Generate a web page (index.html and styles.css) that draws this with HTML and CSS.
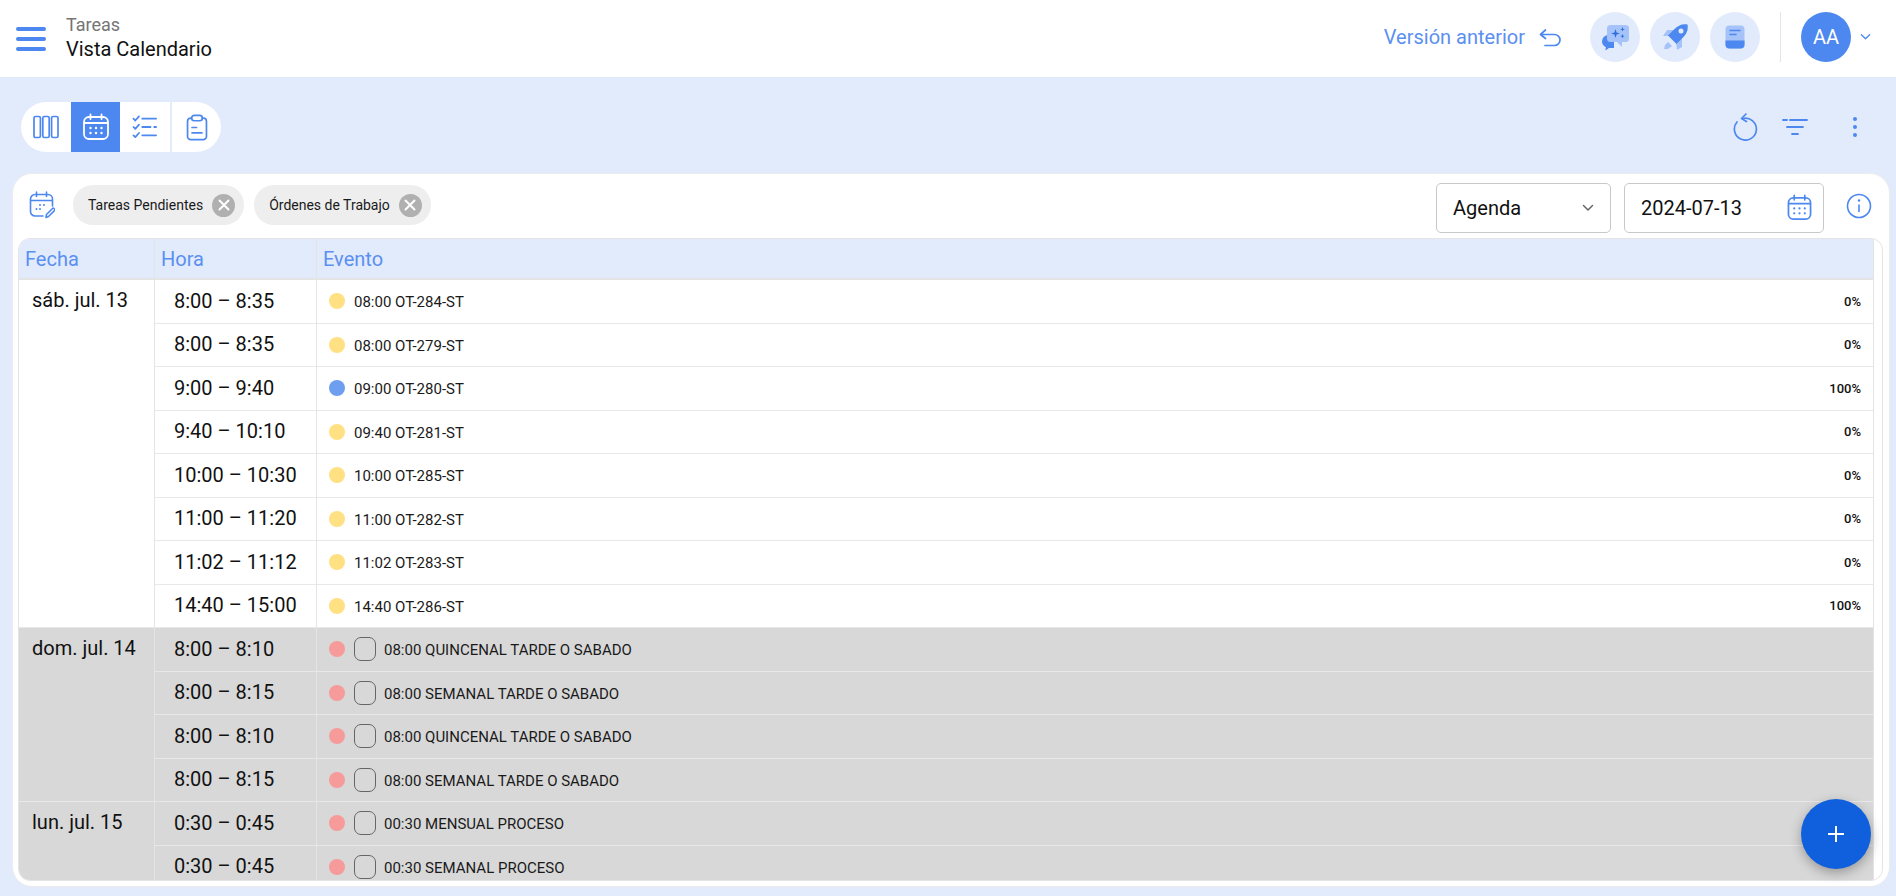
FILE: index.html
```html
<!DOCTYPE html>
<html lang="es">
<head>
<meta charset="utf-8">
<title>Vista Calendario</title>
<link rel="stylesheet" href="styles.css">
</head>
<body>
<header class="topbar">
  <button class="menu-btn" aria-label="Menú"><span></span><span></span><span></span></button>
  <div class="crumbs">
    <div class="crumb-sub">Tareas</div>
    <div class="crumb-title">Vista Calendario</div>
  </div>
  <div class="top-right">
    <a class="prev-link">Versión anterior
      <svg class="ic-undo" viewBox="0 0 22 18" fill="none" stroke="#4d88f0" stroke-width="1.700" stroke-linecap="round" stroke-linejoin="round"><path d="M6.500 1 1.500 5.500 6.500 9.500M1.500 5.500h14a5 5 0 0 1 0 11H6"/></svg>
    </a>
    <div class="round-btns">
      <span class="round-btn"><svg viewBox="0 0 30 30" width="30" height="30"><path d="M2 20a6.500 6.500 0 0 1 6.500-7H14v13H9l-3.500 2.500.3-3.500A6.500 6.500 0 0 1 2 20z" fill="#4d88f0"/><rect x="7" y="3" width="22" height="17" rx="3.500" fill="#a5c3f8"/><path d="M22 19v6l-6-6z" fill="#a5c3f8"/><path d="M15.500 7l1.100 3.400 3.400 1.100-3.400 1.100-1.100 3.400-1.100-3.400-3.400-1.100 3.400-1.100zM22.500 5l.6 1.700 1.700.6-1.700.6-.6 1.700-.6-1.700-1.700-.6 1.700-.6zM22.500 12l.6 1.600 1.600.6-1.600.6-.6 1.600-.6-1.600-1.600-.6 1.600-.6z" fill="#2f6fe0"/></svg></span>
      <span class="round-btn"><svg viewBox="0 0 30 30" width="30" height="30"><path d="M15 8H7l-4 6h7zM22 16v9l-5 3-1-8z" fill="#a5c3f8"/><path d="M8 20l4 4-4 3H4l1-4z" fill="#a5c3f8"/><path d="M27.500 2.500c1 5.500-1 9.500-5 13.500l-6 6-8.500-8.500 6-6c4-4 8-6 13.500-5z" fill="#4d88f0"/><circle cx="21" cy="9" r="2.500" fill="#e2ebfc"/></svg></span>
      <span class="round-btn"><svg viewBox="0 0 30 30" width="30" height="30"><rect x="5.500" y="3.500" width="19" height="23" rx="4" fill="#a5c3f8"/><path d="M5.500 18.500h19v4a4 4 0 0 1-4 4h-11a4 4 0 0 1-4-4z" fill="#4d88f0"/><path d="M10 8.500h10M10 12.500h6" stroke="#4d88f0" stroke-width="1.600" stroke-linecap="round"/></svg></span>
    </div>
    <span class="v-sep"></span>
    <span class="avatar">AA</span>
    <svg class="ic-chev" viewBox="0 0 12 8" fill="none" stroke="#4d88f0" stroke-width="1.500" stroke-linecap="round" stroke-linejoin="round"><path d="M1.500 1.500 6 6l4.500-4.500"/></svg>
  </div>
</header>

<main class="page">
  <div class="toolbar">
    <div class="view-switch">
      <button class="view-btn"><svg viewBox="0 0 28 24" width="28" height="24" fill="none" stroke="#4d88f0" stroke-width="1.700"><rect x="2" y="1.500" width="6.400" height="21" rx="1.500"/><rect x="10.800" y="1.500" width="6.400" height="21" rx="1.500"/><rect x="19.600" y="1.500" width="6.400" height="21" rx="1.500"/></svg></button>
      <button class="view-btn is-active"><svg viewBox="0 0 28 28" width="28" height="28" fill="none" stroke="#fff" stroke-width="1.800" stroke-linecap="round"><rect x="2" y="4" width="24" height="22" rx="5"/><path d="M2.500 10h23M8.500 1.500V6M19.500 1.500V6"/><path d="M8.500 15h.01M14 15h.01M19.500 15h.01M8.500 20h.01M14 20h.01M19.500 20h.01" stroke-width="2.400"/></svg></button>
      <button class="view-btn"><svg viewBox="0 0 28 26" width="26" height="24" fill="none" stroke="#4d88f0" stroke-width="1.900" stroke-linecap="round" stroke-linejoin="round"><path d="M1.500 4l2 2 4-4.500M1.500 13l2 2 4-4.500M1.500 22l2 2 4-4.500"/><path d="M11 4h15M11 13h9M24 13h2M11 22h15"/></svg></button>
      <button class="view-btn view-btn-last"><svg viewBox="0 0 24 30" width="22" height="27" fill="none" stroke="#4d88f0" stroke-width="1.900" stroke-linecap="round"><path d="M6 4.500H5a3.500 3.500 0 0 0-3.500 3.500v17A3.500 3.500 0 0 0 5 28.500h14a3.500 3.500 0 0 0 3.500-3.500V8A3.500 3.500 0 0 0 19 4.500h-1"/><rect x="6" y="1.500" width="12" height="6" rx="3"/><path d="M6.500 15h5M6.500 21h11"/></svg></button>
    </div>
    <div class="tool-actions">
      <svg class="tool-ic" viewBox="0 0 26 28" width="26" height="28" fill="none" stroke="#4d88f0" stroke-width="1.700" stroke-linecap="round" stroke-linejoin="round"><path d="M9.500 5.500A11 11 0 1 1 4 9"/><path d="M13 1 8.500 5.500l5 3"/></svg>
      <svg class="tool-ic" viewBox="0 0 26 18" width="26" height="18" fill="none" stroke="#4d88f0" stroke-width="1.800" stroke-linecap="round"><path d="M1 2h4M8 2h17M5 9h16M10 16h6"/></svg>
      <svg class="tool-ic dots" viewBox="0 0 6 22" width="6" height="22" fill="#4d88f0"><circle cx="3" cy="3" r="2"/><circle cx="3" cy="11" r="2"/><circle cx="3" cy="19" r="2"/></svg>
    </div>
  </div>

  <section class="card">
    <div class="card-head">
      <svg class="ic-cal-edit" viewBox="0 0 26 28" width="26" height="28" fill="none" stroke="#4d88f0" stroke-width="1.600" stroke-linecap="round" stroke-linejoin="round"><path d="M14 25H6a4.500 4.500 0 0 1-4.500-4.500V8A4.500 4.500 0 0 1 6 3.500h13A4.500 4.500 0 0 1 23.500 8v7"/><path d="M2 9.500h21M7.500 1v4.500M17.500 1v4.500"/><path d="M11 14h.01M15 14h.01M7.500 18h.01M11 18h.01" stroke-width="2"/><path d="M17 26.500l.5-3 6-6c1-1 3 1 2 2l-6 6z"/></svg>
      <span class="chip">Tareas Pendientes<i class="chip-x"><svg viewBox="0 0 12 12" width="12" height="12" stroke="#fff" stroke-width="2" stroke-linecap="round"><path d="M1.500 1.500l9 9M10.500 1.500l-9 9"/></svg></i></span>
      <span class="chip">Órdenes de Trabajo<i class="chip-x"><svg viewBox="0 0 12 12" width="12" height="12" stroke="#fff" stroke-width="2" stroke-linecap="round"><path d="M1.500 1.500l9 9M10.500 1.500l-9 9"/></svg></i></span>
      <div class="head-right">
        <div class="field field-select">Agenda
          <svg viewBox="0 0 12 8" width="12" height="8" fill="none" stroke="#666" stroke-width="1.500" stroke-linecap="round" stroke-linejoin="round"><path d="M1.500 1.500 6 6l4.500-4.500"/></svg>
        </div>
        <div class="field field-date">2024-07-13
          <svg viewBox="0 0 26 28" width="25" height="27" fill="none" stroke="#4d88f0" stroke-width="1.800" stroke-linecap="round"><rect x="1.500" y="4" width="23" height="22" rx="5"/><path d="M2 10h22M7.500 1.500V6M18.500 1.500V6"/><path d="M7.500 15h.01M13 15h.01M18.500 15h.01M7.500 20h.01M13 20h.01M18.500 20h.01" stroke-width="2.300"/></svg>
        </div>
        <svg class="ic-info" viewBox="0 0 26 26" width="26" height="26" fill="none" stroke="#4d88f0" stroke-width="1.600" stroke-linecap="round"><circle cx="13" cy="13" r="11.500"/><path d="M13 12v6.500"/><path d="M13 7.500h.01" stroke-width="2.400"/></svg>
      </div>
    </div>

    <div class="agenda-frame">
      <table class="agenda">
        <colgroup><col class="col-date"><col class="col-time"><col></colgroup>
        <thead>
          <tr><th>Fecha</th><th>Hora</th><th>Evento</th></tr>
        </thead>
        <tbody>
          <tr><td class="date" rowspan="8">sáb. jul. 13</td><td class="time">8:00 – 8:35</td><td><div class="ev"><i class="dot y"></i><span class="ev-t">08:00 OT-284-ST</span><b class="pct">0%</b></div></td></tr>
          <tr><td class="time">8:00 – 8:35</td><td><div class="ev"><i class="dot y"></i><span class="ev-t">08:00 OT-279-ST</span><b class="pct">0%</b></div></td></tr>
          <tr><td class="time">9:00 – 9:40</td><td><div class="ev"><i class="dot b"></i><span class="ev-t">09:00 OT-280-ST</span><b class="pct">100%</b></div></td></tr>
          <tr><td class="time">9:40 – 10:10</td><td><div class="ev"><i class="dot y"></i><span class="ev-t">09:40 OT-281-ST</span><b class="pct">0%</b></div></td></tr>
          <tr><td class="time">10:00 – 10:30</td><td><div class="ev"><i class="dot y"></i><span class="ev-t">10:00 OT-285-ST</span><b class="pct">0%</b></div></td></tr>
          <tr><td class="time">11:00 – 11:20</td><td><div class="ev"><i class="dot y"></i><span class="ev-t">11:00 OT-282-ST</span><b class="pct">0%</b></div></td></tr>
          <tr><td class="time">11:02 – 11:12</td><td><div class="ev"><i class="dot y"></i><span class="ev-t">11:02 OT-283-ST</span><b class="pct">0%</b></div></td></tr>
          <tr><td class="time">14:40 – 15:00</td><td><div class="ev"><i class="dot y"></i><span class="ev-t">14:40 OT-286-ST</span><b class="pct">100%</b></div></td></tr>
          <tr class="off"><td class="date" rowspan="4">dom. jul. 14</td><td class="time">8:00 – 8:10</td><td><div class="ev"><i class="dot r"></i><i class="check"></i><span class="ev-t">08:00 QUINCENAL TARDE O SABADO</span></div></td></tr>
          <tr class="off"><td class="time">8:00 – 8:15</td><td><div class="ev"><i class="dot r"></i><i class="check"></i><span class="ev-t">08:00 SEMANAL TARDE O SABADO</span></div></td></tr>
          <tr class="off"><td class="time">8:00 – 8:10</td><td><div class="ev"><i class="dot r"></i><i class="check"></i><span class="ev-t">08:00 QUINCENAL TARDE O SABADO</span></div></td></tr>
          <tr class="off"><td class="time">8:00 – 8:15</td><td><div class="ev"><i class="dot r"></i><i class="check"></i><span class="ev-t">08:00 SEMANAL TARDE O SABADO</span></div></td></tr>
          <tr class="off"><td class="date" rowspan="2">lun. jul. 15</td><td class="time">0:30 – 0:45</td><td><div class="ev"><i class="dot r"></i><i class="check"></i><span class="ev-t">00:30 MENSUAL PROCESO</span></div></td></tr>
          <tr class="off"><td class="time">0:30 – 0:45</td><td><div class="ev"><i class="dot r"></i><i class="check"></i><span class="ev-t">00:30 SEMANAL PROCESO</span></div></td></tr>
        </tbody>
      </table>
    </div>
    <button class="fab" aria-label="Agregar"><svg viewBox="0 0 16 16" width="16" height="16" stroke="#fff" stroke-width="2"><path d="M8 0v16M0 8h16"/></svg></button>
  </section>
</main>
</body>
</html>
```
FILE: styles.css
```css
* { box-sizing: border-box; }
html, body { margin: 0; height: 100%; overflow: hidden; }
body { font-family: Roboto, "Liberation Sans", sans-serif; color: #111; background: #e2ebfc; }
button { border: 0; padding: 0; background: none; font: inherit; }

.topbar { height: 77px; background: #fff; display: flex; align-items: center; padding: 0 25px 0 16px; }
.menu-btn { width: 30px; display: flex; flex-direction: column; gap: 6px; margin-right: 20px; }
.menu-btn span { display: block; height: 4px; border-radius: 2px; background: #4d88f0; }
.crumbs { line-height: 24px; margin-top: -3px; }
.crumb-sub { font-size: 18px; color: #757575; }
.crumb-title { font-size: 20px; color: #111; }
.top-right { margin-left: auto; display: flex; align-items: center; margin-top: -3px; }
.prev-link { font-size: 20px; color: #5b8ff0; display: flex; align-items: center; margin-right: 29px; margin-top: -1px; }
.ic-undo { width: 22px; height: 18px; margin-left: 14px; margin-top: 3px; }
.round-btns { display: flex; gap: 10px; }
.round-btn { width: 50px; height: 50px; border-radius: 50%; background: #e2ebfc; display: flex; align-items: center; justify-content: center; }
.v-sep { width: 1px; height: 50px; background: #e4e4e4; margin: 0 20px; }
.avatar { width: 50px; height: 50px; border-radius: 50%; background: #4d88f0; color: #fff; font-size: 20px; display: flex; align-items: center; justify-content: center; }
.ic-chev { width: 11px; height: 8px; margin-left: 9px; }

.page { height: 819px; display: flex; flex-direction: column; }
.toolbar { height: 96px; padding: 25px 38px 0 21px; display: flex; align-items: flex-start; justify-content: space-between; }
.view-switch { display: grid; grid-template-columns: 50px 49px 50px 51px; height: 50px; width: 200px; border-radius: 25px; background: #fff; overflow: hidden; }
.view-btn { display: flex; align-items: center; justify-content: center; }
.view-btn-last { border-left: 2px solid #e2ebfc; }
.view-btn.is-active { background: #4d88f0; }
.tool-actions { display: flex; align-items: center; height: 50px; gap: 23px; }
.tool-actions .dots { margin-left: 21px; }

.card { position: relative; height: 714px; margin: 0 6px 0 12px; background: #fff; border-radius: 20px; display: flex; flex-direction: column; padding: 0 6px 5px 5px; border: 1px solid #ececec; }
.card-head { height: 64px; flex: none; display: flex; align-items: center; padding: 0 11px 0 11px; gap: 10px; }
.ic-cal-edit { margin-right: 8px; margin-top: -2px; }
.chip { height: 40px; border-radius: 20px; background: #eee; display: flex; align-items: center; padding: 0 9px 0 15px; font-size: 14px; color: #1a1a1a; margin-top: -2px; }
.chip-x { width: 23px; height: 23px; border-radius: 50%; background: #b0b0b0; margin-left: 9px; display: flex; align-items: center; justify-content: center; }
.head-right { margin-left: auto; display: flex; align-items: center; gap: 13px; margin-top: 3px; }
.field { height: 50px; border: 1px solid #c8c8c8; border-radius: 5px; display: flex; align-items: center; justify-content: space-between; font-size: 20px; color: #111; padding: 0 16px; }
.field-select { width: 175px; }
.field-date { width: 200px; padding-right: 11px; }
.ic-info { margin-left: 9px; margin-top: -3px; }

.agenda-frame { flex: 1; min-height: 0; overflow: hidden; border: 1px solid #e4e4e4; border-radius: 12px; padding-right: 8px; background: #fff; }
.agenda { width: 100%; border-collapse: separate; border-spacing: 0; table-layout: fixed; border-right: 1px solid #e4e4e4; }
.col-date { width: 136px; }
.col-time { width: 162px; }
.agenda th { height: 41px; background: #e2ebfc; color: #5b8ff0; font-weight: 400; font-size: 20px; text-align: left; padding: 0 6px; border-right: 1px solid #e4e4e4; border-bottom: 2px solid #e4e4e4; }
.agenda th:last-child { border-right: 0; }
.agenda td { height: 43.500px; padding: 0; border-bottom: 1.500px solid #e8e8e8; border-right: 1px solid #e4e4e4; font-size: 20px; vertical-align: middle; background: #fff; }
.agenda td:last-child { border-right: 0; padding: 0 12px; }
.agenda td.date { vertical-align: top; padding: 8px 0 0 13px; }
.agenda td.time { padding: 0 0 1px 19px; }
.agenda .off td { background: #d8d8d8; }
.ev { display: flex; align-items: center; }
.dot { width: 16px; height: 16px; border-radius: 50%; flex: none; margin-right: 9px; }
.dot.y { background: #ffe082; }
.dot.b { background: #6d9eef; }
.dot.r { background: #f79a9a; }
.check { width: 22px; height: 24px; border: 1.500px solid #666; border-radius: 7px; margin-right: 8px; flex: none; }
.ev-t { font-size: 15px; color: #1a1a1a; padding-top: 2px; }
.pct { margin-left: auto; font-size: 13px; font-weight: 500; color: #111; }

.fab { position: absolute; right: 18px; bottom: 17px; width: 70px; height: 70px; border-radius: 50%; background: #1060dd; display: flex; align-items: center; justify-content: center; box-shadow: 0 4px 12px rgba(0,0,0,.3); }
```
